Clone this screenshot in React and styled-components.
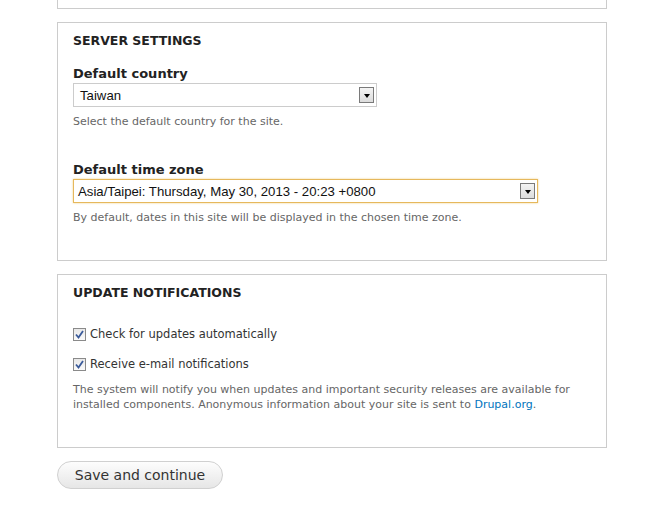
import React from "react";
import styled, { createGlobalStyle } from "styled-components";

const GlobalStyle = createGlobalStyle`
  html, body {
    margin: 0;
    padding: 0;
    background: #fff;
  }
  body {
    font-family: "DejaVu Sans", Verdana, sans-serif;
    color: #333;
  }
`;

const Page = styled.div`
  width: 550px;
  padding: 0 0 0 57px;
  display: flex;
  flex-direction: column;
  gap: 13px;
`;

const PrevBox = styled.div`
  height: 8px;
  border: 1px solid #ccc;
  border-top: none;
`;

const Box = styled.section`
  border: 1px solid #ccc;
  padding: 10px 15px 0 15px;
  height: ${(p) => p.$height}px;
  box-sizing: border-box;
`;

const Legend = styled.h2`
  margin: 0;
  font-size: 12.5px;
  font-weight: bold;
  text-transform: uppercase;
  color: #222;
  line-height: 16px;
  margin-bottom: ${(p) => p.$gap}px;
`;

const Field = styled.div`
  margin-bottom: ${(p) => p.$gap || 0}px;
`;

const Label = styled.label`
  display: block;
  font-size: 13px;
  font-weight: bold;
  color: #222;
  line-height: 16px;
  margin-bottom: 1px;
`;

const Select = styled.div`
  width: ${(p) => p.$width}px;
  height: 24px;
  box-sizing: border-box;
  border: 1px solid ${(p) => (p.$focused ? "#e6b85c" : "#ccc")};
  box-shadow: ${(p) => (p.$focused ? "0 0 2px #f0d08a" : "none")};
  display: flex;
  align-items: center;
  justify-content: space-between;
  padding: 0 2px 0 ${(p) => (p.$focused ? 4 : 6)}px;
  font-family: "Liberation Sans", Arial, sans-serif;
  font-size: 13.2px;
  color: #111;
  background: #fff;
`;

const Arrow = styled.span`
  width: 15px;
  height: 16px;
  box-sizing: border-box;
  border: 1px solid #7a7a7a;
  background: linear-gradient(#f4f4f4, #dcdcdc);
  display: flex;
  align-items: center;
  justify-content: center;
  &::after {
    content: "";
    border-left: 3.5px solid transparent;
    border-right: 3.5px solid transparent;
    border-top: 4px solid #000;
    margin-top: 1px;
  }
`;

const Description = styled.div`
  font-size: 11px;
  color: #666;
  line-height: 15px;
  margin-top: ${(p) => p.$top ?? 7}px;
`;

const CheckRow = styled.label`
  display: flex;
  align-items: center;
  gap: 4px;
  font-size: 11.5px;
  color: #333;
  line-height: 16px;
  margin-bottom: ${(p) => p.$gap}px;
`;

const CheckBox = styled.span`
  width: 13px;
  height: 13px;
  box-sizing: border-box;
  border: 1px solid #8a8a8a;
  background: linear-gradient(#e8e8e8, #fafafa);
  display: flex;
  align-items: center;
  justify-content: center;
`;

const Link = styled.a`
  color: #0074bd;
  text-decoration: none;
`;

const Button = styled.button`
  align-self: flex-start;
  width: 166px;
  height: 28px;
  border: 1px solid #d0d0d0;
  border-radius: 14px;
  background: linear-gradient(#fdfdfd, #e6e6e6);
  font-family: "DejaVu Sans", Verdana, sans-serif;
  font-size: 14px;
  color: #333;
  padding: 0;
`;

const Check = () => (
  <CheckBox>
    <svg width="9" height="9" viewBox="0 0 9 9">
      <path d="M1 4.5 L3.5 7.5 L8 1" fill="none" stroke="#3a5a9a" strokeWidth="1.8" />
    </svg>
  </CheckBox>
);

export default function App() {
  return (
    <>
      <GlobalStyle />
      <Page>
        <PrevBox />
        <Box $height={239}>
          <Legend $gap={17}>Server settings</Legend>
          <Field $gap={33}>
            <Label>Default country</Label>
            <Select $width={304}>
              Taiwan
              <Arrow />
            </Select>
            <Description>Select the default country for the site.</Description>
          </Field>
          <Field>
            <Label>Default time zone</Label>
            <Select $width={465} $focused>
              Asia/Taipei: Thursday, May 30, 2013 - 20:23 +0800
              <Arrow />
            </Select>
            <Description>By default, dates in this site will be displayed in the chosen time zone.</Description>
          </Field>
        </Box>
        <Box $height={174}>
          <Legend $gap={25}>Update notifications</Legend>
          <CheckRow $gap={14}>
            <Check />
            Check for updates automatically
          </CheckRow>
          <CheckRow $gap={10}>
            <Check />
            Receive e-mail notifications
          </CheckRow>
          <Description $top={0}>
            The system will notify you when updates and important security releases are available for
            installed components. Anonymous information about your site is sent to{" "}
            <Link href="#">Drupal.org</Link>.
          </Description>
        </Box>
        <Button>Save and continue</Button>
      </Page>
    </>
  );
}
